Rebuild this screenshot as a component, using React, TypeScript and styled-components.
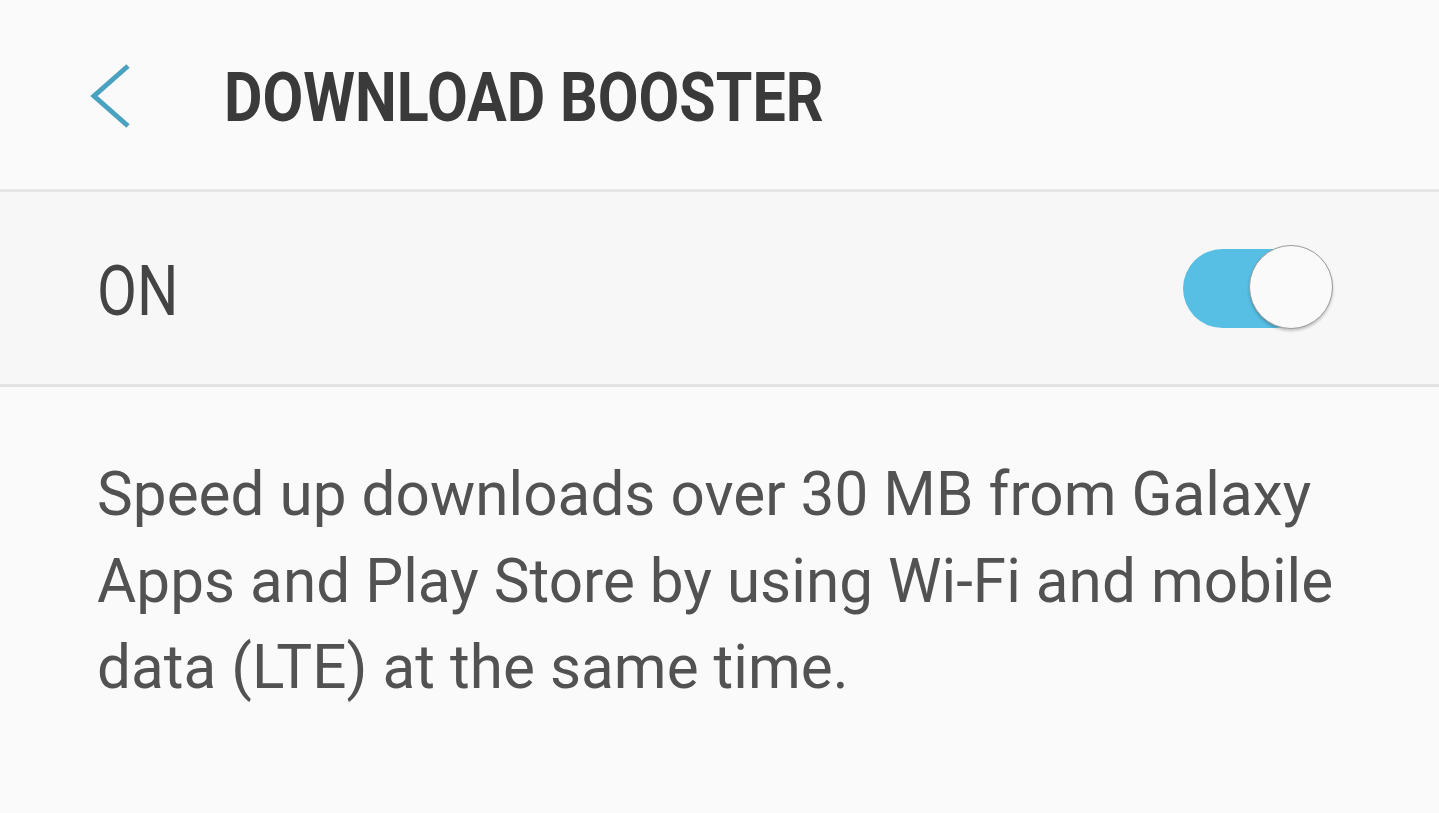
import React from "react";
import styled, { createGlobalStyle } from "styled-components";

const Global = createGlobalStyle`
  html, body { margin: 0; padding: 0; background: #fafafa; }
  body { font-family: Roboto, "Noto Sans", sans-serif; -webkit-font-smoothing: antialiased; }
`;

const Page = styled.div`
  width: 1439px;
  height: 813px;
  background: #fafafa;
  display: flex;
  flex-direction: column;
  overflow: hidden;
`;

const Header = styled.header`
  height: 192px;
  flex-shrink: 0;
  display: flex;
  align-items: flex-start;
  padding-left: 88px;
  box-sizing: border-box;
  background: #fafafa;
  border-bottom: 3px solid #e6e6e6;
`;

const BackButton = styled.button`
  border: none;
  background: transparent;
  padding: 0;
  margin: 63px 0 0 0;
  width: 44px;
  height: 66px;
  display: flex;
  align-items: center;
  justify-content: center;
  cursor: pointer;
`;

const Title = styled.h1`
  margin: 64px 0 0 92px;
  font-family: Roboto, sans-serif;
  font-weight: 700;
  font-size: 68px;
  color: #3a3a3a;
  display: inline-block;
  transform: scaleX(0.87);
  transform-origin: left center;
  white-space: nowrap;
  letter-spacing: 0;
  line-height: 1;
`;

const Row = styled.div`
  height: 195px;
  flex-shrink: 0;
  box-sizing: border-box;
  background: #f7f7f7;
  border-bottom: 3px solid #e3e3e3;
  display: flex;
  align-items: center;
  justify-content: space-between;
  padding: 0 106px 0 97px;
`;

const RowLabel = styled.span`
  font-family: Roboto, sans-serif;
  font-size: 70px;
  font-weight: 400;
  color: #444444;
  display: inline-block;
  transform: scaleX(0.83);
  transform-origin: left center;
  line-height: 1;
  margin-top: 6px;
`;

const Switch = styled.div`
  position: relative;
  width: 150px;
  height: 86px;
  display: flex;
  align-items: center;
  margin-top: -1px;
`;

const Track = styled.div<{ $on: boolean }>`
  width: 132px;
  height: 79px;
  border-radius: 40px;
  background: ${(p) => (p.$on ? "#57bfe4" : "#bdbdbd")};
  margin-top: 2px;
`;

const Thumb = styled.div`
  position: absolute;
  right: 0;
  top: 0;
  width: 84px;
  height: 84px;
  box-sizing: border-box;
  border-radius: 50%;
  background: #fafafa;
  border: 1.5px solid #9c9c9c;
  box-shadow: 0 2px 3px rgba(0, 0, 0, 0.22);
`;

const Description = styled.p`
  margin: 0;
  padding: 65px 70px 0 97px;
  font-family: Roboto, sans-serif;
  font-size: 60.2px;
  letter-spacing: 0.05px;
  line-height: 86.5px;
  color: #525252;
`;

export default function App() {
  return (
    <Page>
      <Global />
      <Header>
        <BackButton aria-label="Back">
          <svg width="44" height="66" viewBox="0 0 44 66">
            <polyline
              points="40,3 6,33 40,63"
              fill="none"
              stroke="#4aa2c1"
              strokeWidth="5"
            />
          </svg>
        </BackButton>
        <Title>DOWNLOAD BOOSTER</Title>
      </Header>
      <Row>
        <RowLabel>ON</RowLabel>
        <Switch role="switch" aria-checked={true}>
          <Track $on={true} />
          <Thumb />
        </Switch>
      </Row>
      <Description>
        Speed up downloads over 30 MB from Galaxy Apps and Play Store by using
        Wi-Fi and mobile data (LTE) at the same time.
      </Description>
    </Page>
  );
}
